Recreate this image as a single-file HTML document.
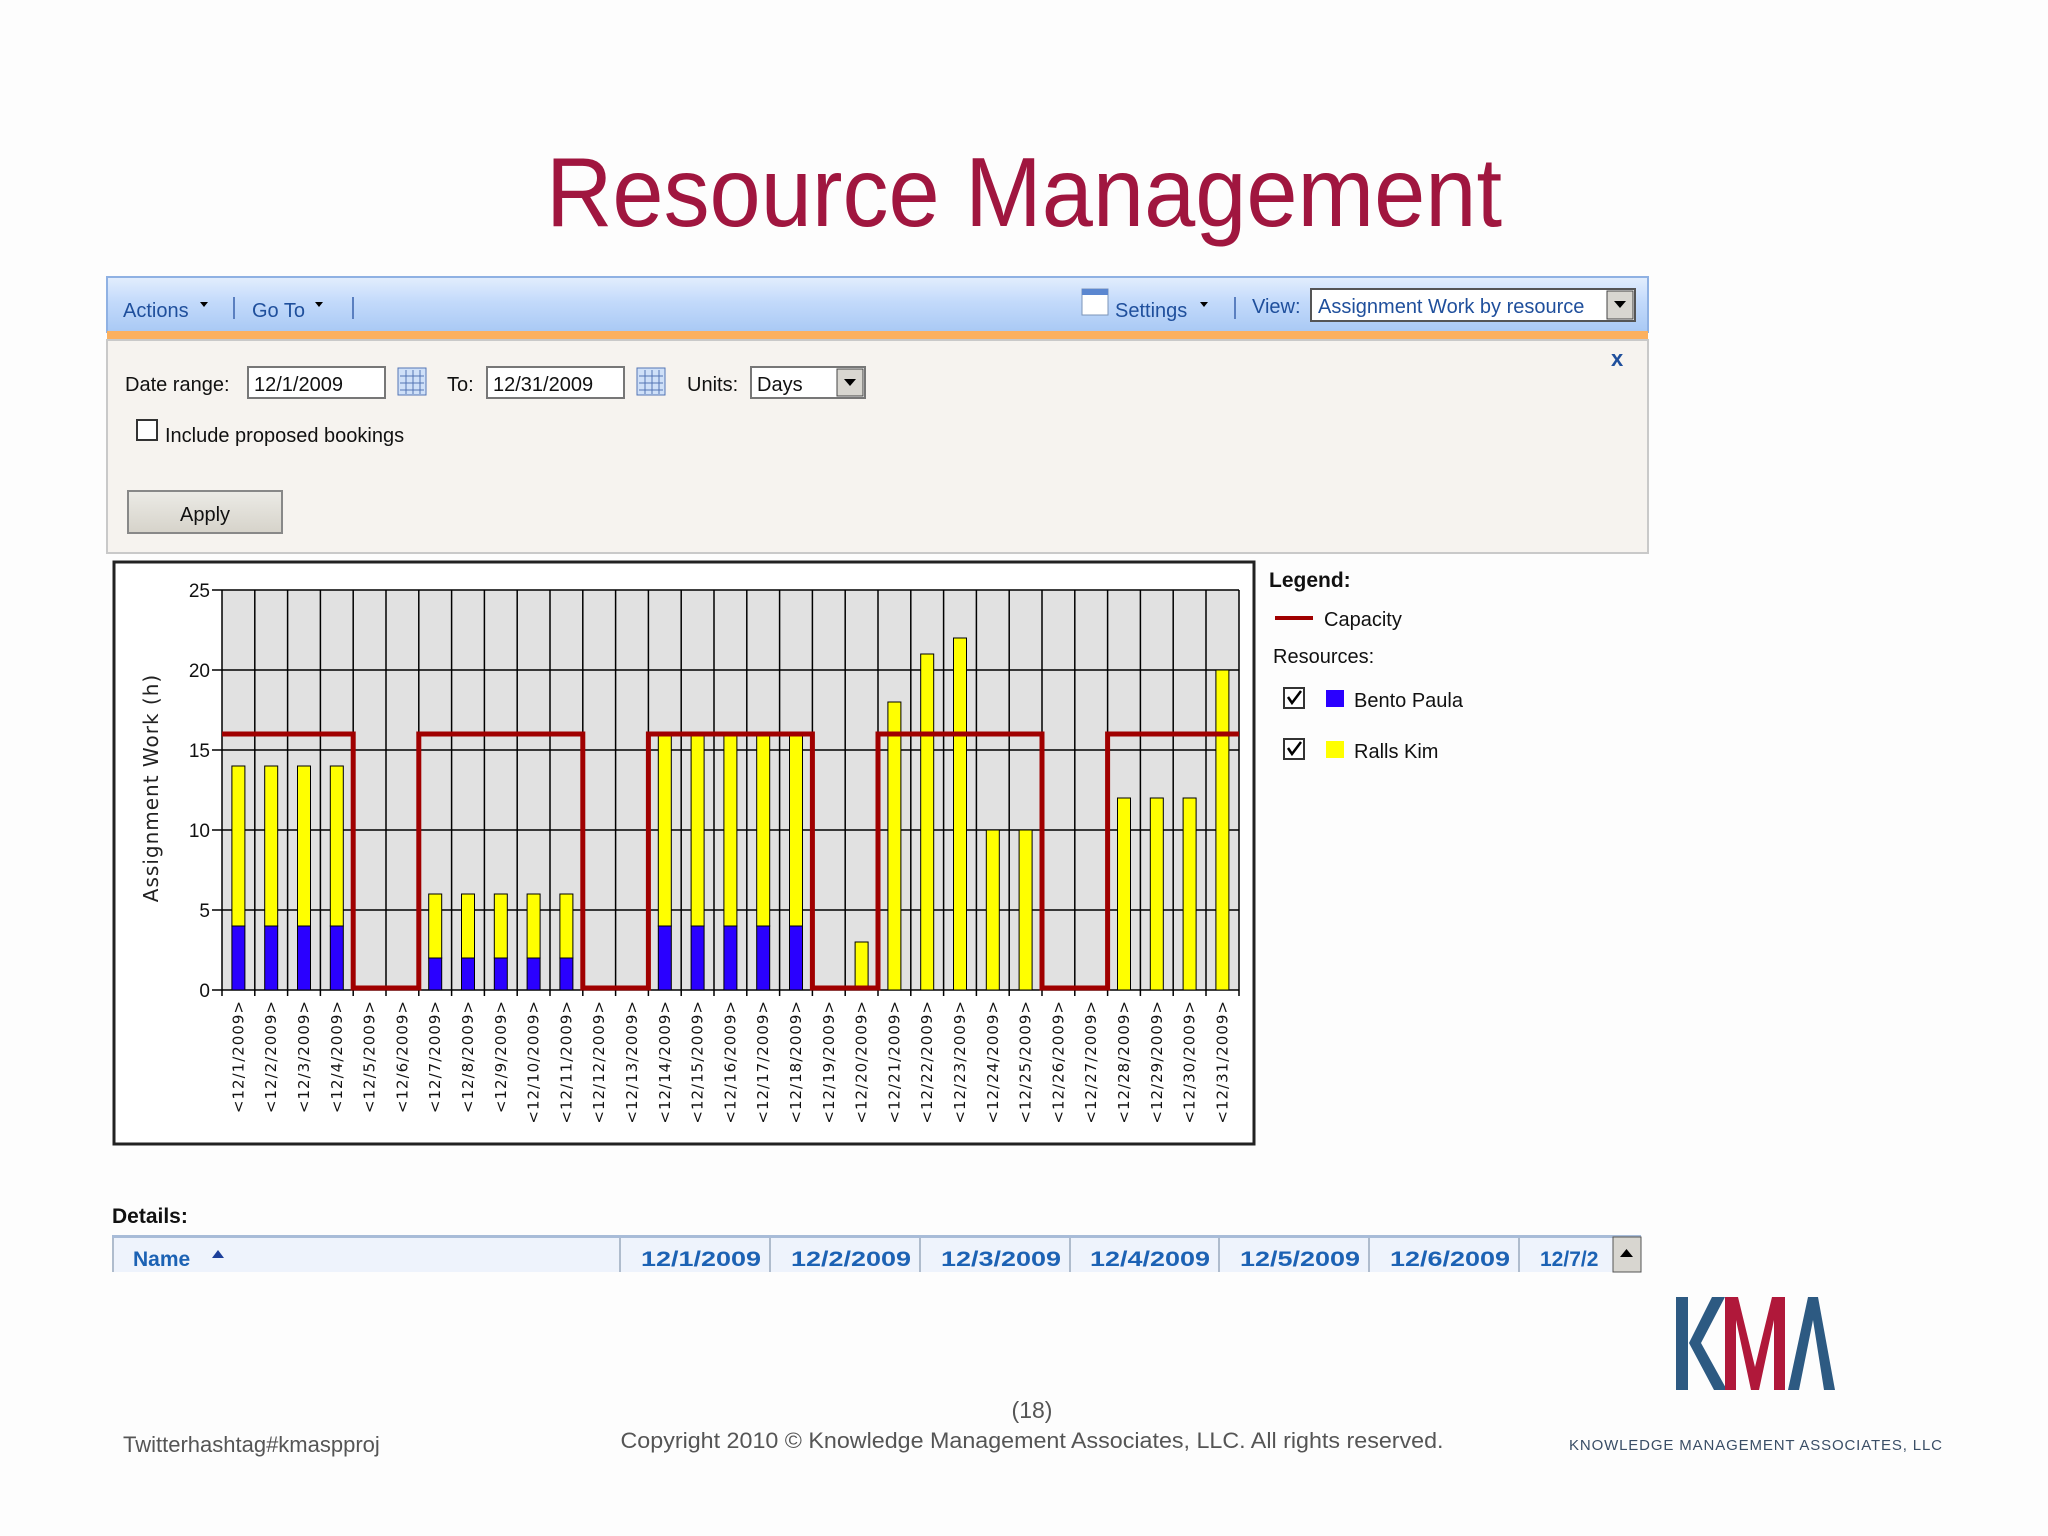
<!DOCTYPE html>
<html><head><meta charset="utf-8"><style>
html,body{margin:0;padding:0;background:#fdfdfd;}
svg{display:block}
</style></head><body>
<svg width="2048" height="1536" viewBox="0 0 2048 1536" xmlns="http://www.w3.org/2000/svg" font-family="Liberation Sans, sans-serif">
<defs>
<linearGradient id="tb" x1="0" y1="0" x2="0" y2="1"><stop offset="0" stop-color="#e3eefd"/><stop offset="0.45" stop-color="#c3dafb"/><stop offset="1" stop-color="#a9c9f4"/></linearGradient>
<linearGradient id="btn" x1="0" y1="0" x2="0" y2="1"><stop offset="0" stop-color="#ecebe6"/><stop offset="1" stop-color="#d6d3ca"/></linearGradient>
</defs>
<rect width="2048" height="1536" fill="#fdfdfd"/>
<text x="1024" y="226" text-anchor="middle" font-size="98" fill="#a0163f" textLength="956" lengthAdjust="spacingAndGlyphs">Resource Management</text>

<rect x="107" y="277" width="1541" height="55" fill="url(#tb)" stroke="#8fb1e3" stroke-width="2"/>
<rect x="107" y="331" width="1541" height="9" fill="#fbb05f"/>
<rect x="107" y="340" width="1541" height="213" fill="#f6f3ef" stroke="#c9c9c9" stroke-width="2"/>
<g font-size="20" fill="#1f4f9c">
<text x="123" y="317">Actions</text><path d="M200 302h8l-4 5z" fill="#000"/>
<rect x="233" y="297" width="2" height="22" fill="#5a7fc0"/>
<text x="252" y="317">Go To</text><path d="M315 302h8l-4 5z" fill="#000"/>
<rect x="352" y="297" width="2" height="22" fill="#5a7fc0"/>
<rect x="1082" y="289" width="26" height="26" fill="#fff" stroke="#7b94b8"/><rect x="1082" y="289" width="26" height="6" fill="#5b87d0"/>
<text x="1115" y="317">Settings</text><path d="M1200 302h8l-4 5z" fill="#000"/>
<rect x="1234" y="297" width="2" height="22" fill="#5a7fc0"/>
<text x="1252" y="313">View:</text>
</g>
<rect x="1311" y="289" width="324" height="32" fill="#fff" stroke="#555" stroke-width="2"/>
<text x="1318" y="313" font-size="20" fill="#1f4f9c">Assignment Work by resource</text>
<rect x="1607" y="291" width="26" height="28" fill="#d8d6d0" stroke="#444"/><path d="M1614 301h12l-6 7z" fill="#000"/>
<text x="1611" y="366" font-size="22" font-weight="bold" fill="#1f4f9c">x</text>

<g font-size="20" fill="#111">
<text x="125" y="391">Date range:</text>
<rect x="248" y="367" width="137" height="31" fill="#fff" stroke="#777" stroke-width="2"/><text x="254" y="391">12/1/2009</text>
<rect x="398" y="368" width="28" height="27" fill="#cfe0f8" stroke="#5476b5"/><path d="M400 376h24M400 383h24M400 390h24M406 370v24M413 370v24M420 370v24" stroke="#5476b5"/>
<text x="447" y="391">To:</text>
<rect x="487" y="367" width="137" height="31" fill="#fff" stroke="#777" stroke-width="2"/><text x="493" y="391">12/31/2009</text>
<rect x="637" y="368" width="28" height="27" fill="#cfe0f8" stroke="#5476b5"/><path d="M639 376h24M639 383h24M639 390h24M645 370v24M652 370v24M659 370v24" stroke="#5476b5"/>
<text x="687" y="391">Units:</text>
<rect x="751" y="367" width="114" height="31" fill="#fff" stroke="#777" stroke-width="2"/><text x="757" y="391">Days</text>
<rect x="837" y="369" width="26" height="27" fill="#d8d6d0" stroke="#444"/><path d="M844 379h12l-6 7z" fill="#000"/>
<rect x="137" y="420" width="20" height="20" fill="#fff" stroke="#333" stroke-width="2"/>
<text x="165" y="442">Include proposed bookings</text>
</g>
<rect x="128" y="491" width="154" height="42" fill="url(#btn)" stroke="#888" stroke-width="2"/>
<text x="205" y="521" font-size="20" text-anchor="middle" fill="#111">Apply</text>

<rect x="114" y="562" width="1140" height="582" fill="#fff" stroke="#222" stroke-width="3"/>
<rect x="222" y="590" width="1017" height="400" fill="#e1e1e1"/>
<g stroke="#000" stroke-width="1.5">
<path d="M222 590H1239M222 670H1239M222 750H1239M222 830H1239M222 910H1239M222 990H1239"/>
<path d="M212 590h10M212 670h10M212 750h10M212 830h10M212 910h10M212 990h10"/>
<path d="M222 590V996M254.8 590V996M287.6 590V996M320.4 590V996M353.2 590V996M386 590V996M418.8 590V996M451.6 590V996M484.4 590V996M517.2 590V996M550 590V996M582.8 590V996M615.6 590V996M648.4 590V996M681.2 590V996M714 590V996M746.8 590V996M779.6 590V996M812.4 590V996M845.2 590V996M878 590V996M910.8 590V996M943.6 590V996M976.4 590V996M1009.2 590V996M1042 590V996M1074.8 590V996M1107.6 590V996M1140.4 590V996M1173.2 590V996M1206 590V996M1239 590V996"/>
</g>
<g font-size="19" fill="#111" text-anchor="end">
<text x="210" y="597">25</text><text x="210" y="677">20</text><text x="210" y="757">15</text><text x="210" y="837">10</text><text x="210" y="917">5</text><text x="210" y="997">0</text>
</g>
<text transform="translate(158,788) rotate(-90)" font-family="DejaVu Sans, sans-serif" font-size="20" fill="#222" text-anchor="middle" letter-spacing="1">Assignment Work (h)</text>
<g stroke="#000" stroke-width="1">
<g fill="#ffff00">
<rect x="231.9" y="766" width="13" height="160"/><rect x="264.7" y="766" width="13" height="160"/><rect x="297.5" y="766" width="13" height="160"/><rect x="330.3" y="766" width="13" height="160"/>
<rect x="428.7" y="894" width="13" height="64"/><rect x="461.5" y="894" width="13" height="64"/><rect x="494.3" y="894" width="13" height="64"/><rect x="527.1" y="894" width="13" height="64"/><rect x="559.9" y="894" width="13" height="64"/>
<rect x="658.3" y="734" width="13" height="192"/><rect x="691.1" y="734" width="13" height="192"/><rect x="723.9" y="734" width="13" height="192"/><rect x="756.7" y="734" width="13" height="192"/><rect x="789.5" y="734" width="13" height="192"/>
<rect x="855.1" y="942" width="13" height="48"/>
<rect x="887.9" y="702" width="13" height="288"/><rect x="920.7" y="654" width="13" height="336"/><rect x="953.5" y="638" width="13" height="352"/><rect x="986.3" y="830" width="13" height="160"/><rect x="1019.1" y="830" width="13" height="160"/>
<rect x="1117.5" y="798" width="13" height="192"/><rect x="1150.3" y="798" width="13" height="192"/><rect x="1183.1" y="798" width="13" height="192"/><rect x="1215.9" y="670" width="13" height="320"/>
</g>
<g fill="#2a00ff">
<rect x="231.9" y="926" width="13" height="64"/><rect x="264.7" y="926" width="13" height="64"/><rect x="297.5" y="926" width="13" height="64"/><rect x="330.3" y="926" width="13" height="64"/>
<rect x="428.7" y="958" width="13" height="32"/><rect x="461.5" y="958" width="13" height="32"/><rect x="494.3" y="958" width="13" height="32"/><rect x="527.1" y="958" width="13" height="32"/><rect x="559.9" y="958" width="13" height="32"/>
<rect x="658.3" y="926" width="13" height="64"/><rect x="691.1" y="926" width="13" height="64"/><rect x="723.9" y="926" width="13" height="64"/><rect x="756.7" y="926" width="13" height="64"/><rect x="789.5" y="926" width="13" height="64"/>
</g>
</g>
<path d="M222 734H353.2V988H418.8V734H582.8V988H648.4V734H812.4V988H878V734H1042V988H1107.6V734H1239" fill="none" stroke="#a00000" stroke-width="5"/>
<g font-family="DejaVu Sans, sans-serif" font-size="15" fill="#111" text-anchor="end" letter-spacing="1">
<text transform="translate(243.4,1000) rotate(-90)">&lt;12/1/2009&gt;</text>
<text transform="translate(276.2,1000) rotate(-90)">&lt;12/2/2009&gt;</text>
<text transform="translate(309,1000) rotate(-90)">&lt;12/3/2009&gt;</text>
<text transform="translate(341.8,1000) rotate(-90)">&lt;12/4/2009&gt;</text>
<text transform="translate(374.6,1000) rotate(-90)">&lt;12/5/2009&gt;</text>
<text transform="translate(407.4,1000) rotate(-90)">&lt;12/6/2009&gt;</text>
<text transform="translate(440.2,1000) rotate(-90)">&lt;12/7/2009&gt;</text>
<text transform="translate(473,1000) rotate(-90)">&lt;12/8/2009&gt;</text>
<text transform="translate(505.8,1000) rotate(-90)">&lt;12/9/2009&gt;</text>
<text transform="translate(538.6,1000) rotate(-90)">&lt;12/10/2009&gt;</text>
<text transform="translate(571.4,1000) rotate(-90)">&lt;12/11/2009&gt;</text>
<text transform="translate(604.2,1000) rotate(-90)">&lt;12/12/2009&gt;</text>
<text transform="translate(637,1000) rotate(-90)">&lt;12/13/2009&gt;</text>
<text transform="translate(669.8,1000) rotate(-90)">&lt;12/14/2009&gt;</text>
<text transform="translate(702.6,1000) rotate(-90)">&lt;12/15/2009&gt;</text>
<text transform="translate(735.4,1000) rotate(-90)">&lt;12/16/2009&gt;</text>
<text transform="translate(768.2,1000) rotate(-90)">&lt;12/17/2009&gt;</text>
<text transform="translate(801,1000) rotate(-90)">&lt;12/18/2009&gt;</text>
<text transform="translate(833.8,1000) rotate(-90)">&lt;12/19/2009&gt;</text>
<text transform="translate(866.6,1000) rotate(-90)">&lt;12/20/2009&gt;</text>
<text transform="translate(899.4,1000) rotate(-90)">&lt;12/21/2009&gt;</text>
<text transform="translate(932.2,1000) rotate(-90)">&lt;12/22/2009&gt;</text>
<text transform="translate(965,1000) rotate(-90)">&lt;12/23/2009&gt;</text>
<text transform="translate(997.8,1000) rotate(-90)">&lt;12/24/2009&gt;</text>
<text transform="translate(1030.6,1000) rotate(-90)">&lt;12/25/2009&gt;</text>
<text transform="translate(1063.4,1000) rotate(-90)">&lt;12/26/2009&gt;</text>
<text transform="translate(1096.2,1000) rotate(-90)">&lt;12/27/2009&gt;</text>
<text transform="translate(1129,1000) rotate(-90)">&lt;12/28/2009&gt;</text>
<text transform="translate(1161.8,1000) rotate(-90)">&lt;12/29/2009&gt;</text>
<text transform="translate(1194.6,1000) rotate(-90)">&lt;12/30/2009&gt;</text>
<text transform="translate(1227.4,1000) rotate(-90)">&lt;12/31/2009&gt;</text>
</g>

<text x="1269" y="587" font-size="21" font-weight="bold" fill="#111">Legend:</text>
<rect x="1275" y="616" width="38" height="4" fill="#a00000"/>
<text x="1324" y="626" font-size="20" fill="#111">Capacity</text>
<text x="1273" y="663" font-size="20" fill="#111">Resources:</text>
<rect x="1284" y="688" width="20" height="20" fill="#fff" stroke="#333" stroke-width="2"/><path d="M1288 697l4 6 9-12" fill="none" stroke="#000" stroke-width="2.5"/>
<rect x="1326" y="690" width="18" height="17" fill="#2a00ff"/>
<text x="1354" y="707" font-size="20" fill="#111">Bento Paula</text>
<rect x="1284" y="739" width="20" height="20" fill="#fff" stroke="#333" stroke-width="2"/><path d="M1288 748l4 6 9-12" fill="none" stroke="#000" stroke-width="2.5"/>
<rect x="1326" y="741" width="18" height="17" fill="#ffff00"/>
<text x="1354" y="758" font-size="20" fill="#111">Ralls Kim</text>

<text x="112" y="1223" font-size="21" font-weight="bold" fill="#111">Details:</text>
<rect x="112" y="1236" width="1529" height="36" fill="#eef3fc"/>
<rect x="112" y="1235" width="1529" height="3" fill="#a8bcd8"/>
<path d="M113 1238V1272M620 1238V1272M770 1238V1272M920 1238V1272M1070 1238V1272M1219 1238V1272M1369 1238V1272M1519 1238V1272" stroke="#9aa9bd" stroke-width="1.5"/>
<g font-size="21" font-weight="bold" fill="#1c62b4">
<text x="641" y="1266" textLength="120" lengthAdjust="spacingAndGlyphs">12/1/2009</text>
<text x="791" y="1266" textLength="120" lengthAdjust="spacingAndGlyphs">12/2/2009</text>
<text x="941" y="1266" textLength="120" lengthAdjust="spacingAndGlyphs">12/3/2009</text>
<text x="1090" y="1266" textLength="120" lengthAdjust="spacingAndGlyphs">12/4/2009</text>
<text x="1240" y="1266" textLength="120" lengthAdjust="spacingAndGlyphs">12/5/2009</text>
<text x="1390" y="1266" textLength="120" lengthAdjust="spacingAndGlyphs">12/6/2009</text>
<text x="1540" y="1266">12/7/2</text>
<text x="133" y="1266">Name</text>
</g>
<path d="M212 1258h12l-6-8z" fill="#1c3f9a"/>
<rect x="1613" y="1237" width="28" height="35" fill="#d8d6d0" stroke="#555"/><path d="M1620 1257h13l-6.5-8z" fill="#000"/>

<text x="123" y="1452" font-size="22" fill="#555">Twitterhashtag#kmaspproj</text>
<text x="1032" y="1418" font-size="23" fill="#555" text-anchor="middle">(18)</text>
<text x="1032" y="1448" font-size="22" fill="#555" text-anchor="middle" textLength="823" lengthAdjust="spacingAndGlyphs">Copyright 2010 © Knowledge Management Associates, LLC.  All rights reserved.</text>

<path d="M1676 1297h12v93h-12z M1689 1343l23-46h13l-24 46 26 47h-13z" fill="#2d5a82"/>
<path d="M1725 1297h13l17 70 17-70h13v93h-11v-70l-15 70h-8l-15-70v70h-11z" fill="#b0183a"/>
<path d="M1788 1390l20-93h10l17 93h-11l-11-70-14 70z" fill="#2d5a82"/>
<text x="1569" y="1450" font-size="15" fill="#3a4e66" textLength="373" lengthAdjust="spacing">KNOWLEDGE MANAGEMENT ASSOCIATES, LLC</text>
</svg>
</body></html>
